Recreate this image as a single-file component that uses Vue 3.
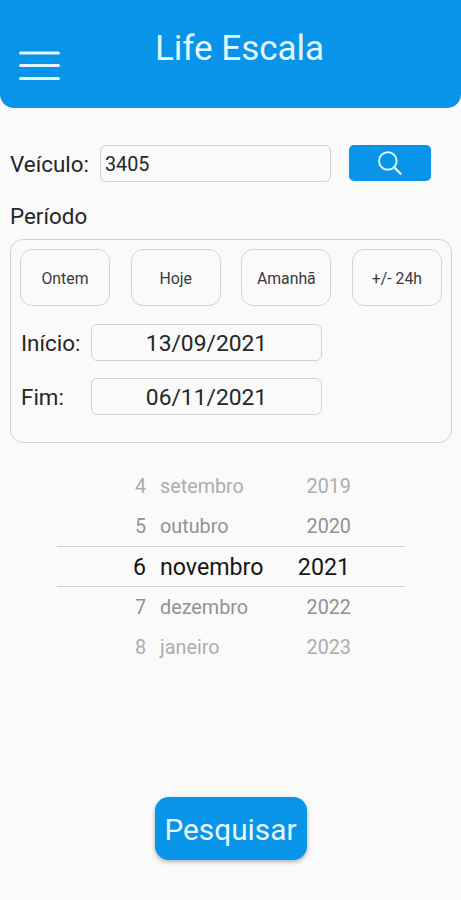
<script setup>
import { ref } from 'vue'

const vehicle = ref('3405')
const shortcuts = ['Ontem', 'Hoje', 'Amanhã', '+/- 24h']
const start = ref('13/09/2021')
const end = ref('06/11/2021')
const wheel = [
  { day: 4, month: 'setembro', year: 2019, tone: 'far' },
  { day: 5, month: 'outubro', year: 2020, tone: 'near' },
  { day: 6, month: 'novembro', year: 2021, tone: 'selected' },
  { day: 7, month: 'dezembro', year: 2022, tone: 'near' },
  { day: 8, month: 'janeiro', year: 2023, tone: 'far' },
]
</script>

<template>
  <main class="screen">
    <header class="topbar">
      <button class="menu" aria-label="Menu">
        <svg width="41" height="30" viewBox="0 0 41 30" stroke="#e6f8ff" stroke-width="3" stroke-linecap="round">
          <path d="M1.5 2H39.5M1.5 14.6H39.5M1.5 27.4H39.5" />
        </svg>
      </button>
      <h1 class="title">Life Escala</h1>
    </header>

    <section class="vehicle">
      <span class="label vehicle-label">Veículo:</span>
      <div class="field vehicle-field">{{ vehicle }}</div>
      <button class="search" aria-label="Buscar">
        <svg width="24" height="24" viewBox="0 0 24 24" fill="none" stroke="#dff5ff" stroke-width="1.9" stroke-linecap="round">
          <circle cx="9.8" cy="10" r="8.8" />
          <path d="M16.2 16.4L22.6 22.8" stroke-width="2.3" />
        </svg>
      </button>
    </section>

    <h2 class="label period-title">Período</h2>

    <section class="period">
      <div class="shortcuts">
        <button v-for="s in shortcuts" :key="s" class="shortcut">{{ s }}</button>
      </div>
      <div class="date-row">
        <span class="label date-label">Início:</span>
        <div class="field date-field">{{ start }}</div>
      </div>
      <div class="date-row">
        <span class="label date-label">Fim:</span>
        <div class="field date-field">{{ end }}</div>
      </div>
    </section>

    <section class="wheel">
      <div v-for="row in wheel" :key="row.day" class="wheel-row" :class="row.tone">
        <span class="day">{{ row.day }}</span>
        <span class="month">{{ row.month }}</span>
        <span class="year">{{ row.year }}</span>
      </div>
    </section>

    <button class="submit">Pesquisar</button>
  </main>
</template>

<style>
body {
  background: #fafafa;
}
</style>

<style scoped>
.screen {
  box-sizing: border-box;
  width: 461px;
  height: 900px;
  overflow: hidden;
  background: #fafafa;
  font-family: Roboto, "Liberation Sans", sans-serif;
  color: #262626;
  display: flex;
  flex-direction: column;
}
button {
  font-family: inherit;
  margin: 0;
  padding: 0;
  border: 0;
  background: none;
  color: inherit;
}
.topbar {
  height: 108px;
  flex: none;
  background: #0894e8;
  border-radius: 0 0 14px 14px;
  display: grid;
  grid-template-columns: 60px 1fr 42px;
}
.menu {
  display: flex;
  margin: 51px 0 0 19px;
  width: 41px;
  height: 30px;
}
.title {
  margin: 28px 0 0;
  text-align: center;
  font-size: 35px;
  line-height: 42px;
  font-weight: 400;
  color: #e6f7ff;
}
.label {
  font-size: 22.4px;
  line-height: 28px;
  font-weight: 400;
}
.field {
  box-sizing: border-box;
  height: 37px;
  border: 1.5px solid #d3d3d3;
  border-radius: 6px;
  padding-top: 2px;
  display: flex;
  align-items: center;
}
.vehicle {
  display: flex;
  align-items: center;
  margin: 36.5px 0 0 10px;
  height: 37px;
}
.vehicle-label {
  width: 90px;
  padding-top: 1px;
}
.vehicle-field {
  width: 231px;
  padding-left: 4px;
  font-size: 19.8px;
}
.search {
  width: 82px;
  height: 36px;
  margin-left: 18px;
  border-radius: 5px;
  background: #0894e8;
  display: flex;
  align-items: center;
  justify-content: center;
}
.period-title {
  margin: 20px 0 0 10px;
}
.period {
  box-sizing: border-box;
  width: 442px;
  height: 204px;
  flex: none;
  margin: 9px 0 0 10px;
  padding: 9px 9px 0 9px;
  border: 1.5px solid #d3d3d3;
  border-radius: 13px;
}
.shortcuts {
  display: flex;
  justify-content: space-between;
  margin-bottom: 18px;
}
.shortcut {
  box-sizing: border-box;
  width: 90px;
  height: 57px;
  padding-top: 2px;
  border: 1.5px solid #d3d3d3;
  border-radius: 12px;
  font-size: 15.8px;
  color: #3a3a3a;
}
.date-row {
  display: flex;
  align-items: center;
  margin-bottom: 17.5px;
}
.date-label {
  width: 70px;
  padding: 1px 0 0 1px;
  box-sizing: border-box;
}
.date-field {
  width: 231px;
  margin-left: 1px;
  justify-content: center;
  font-size: 22.8px;
}
.wheel {
  margin: 23px 56px 0 57px;
}
.wheel-row {
  box-sizing: border-box;
  height: 40px;
  padding-top: 2px;
  display: grid;
  grid-template-columns: 89px 133px 72px;
  align-items: center;
  font-size: 19.8px;
}
.day {
  text-align: right;
}
.month {
  padding-left: 14px;
}
.year {
  text-align: right;
}
.near {
  color: #929292;
}
.far {
  color: #adadad;
}
.selected {
  grid-template-columns: 89px 133px 71px;
  height: 41px;
  border-top: 1px solid #cfcfcf;
  border-bottom: 1px solid #cfcfcf;
  padding-top: 1px;
  font-size: 23.2px;
  color: #151515;
}
.submit {
  align-self: center;
  width: 152px;
  height: 63px;
  margin-top: 130px;
  padding-top: 2px;
  border-radius: 14px;
  background: #0894e8;
  box-shadow: 0 2px 4px rgba(0, 0, 0, 0.3);
  color: #e6f7ff;
  font-size: 29.8px;
}
</style>
